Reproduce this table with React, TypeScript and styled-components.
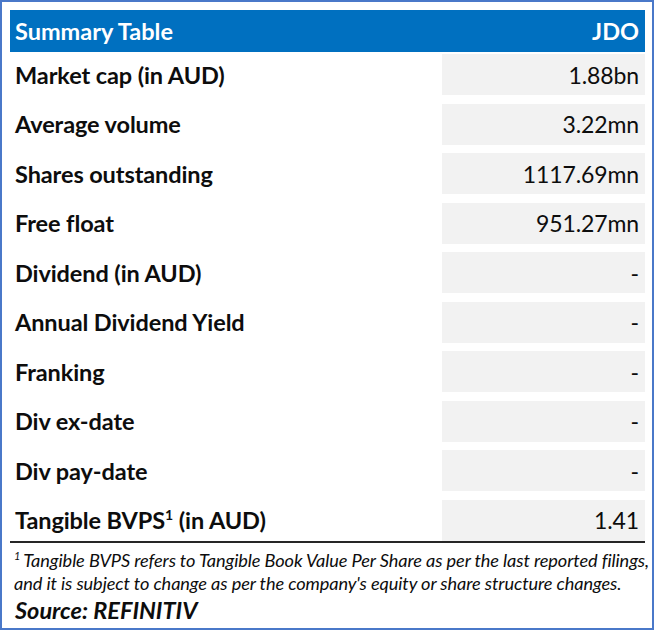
import React, { FC } from 'react';
import styled, { createGlobalStyle } from 'styled-components';

const GlobalStyle = createGlobalStyle`
  html, body {
    margin: 0;
    padding: 0;
    background: #ffffff;
  }
`

interface Row {
  label: string
  sup?: string
  rest?: string
  value: string
}

const rows: Row[] = [
  { label: 'Market cap (in AUD)', value: '1.88bn' },
  { label: 'Average volume', value: '3.22mn' },
  { label: 'Shares outstanding', value: '1117.69mn' },
  { label: 'Free float', value: '951.27mn' },
  { label: 'Dividend (in AUD)', value: '-' },
  { label: 'Annual Dividend Yield', value: '-' },
  { label: 'Franking', value: '-' },
  { label: 'Div ex-date', value: '-' },
  { label: 'Div pay-date', value: '-' },
  { label: 'Tangible BVPS', sup: '1', rest: ' (in AUD)', value: '1.41' },
]

const Frame = styled.div`
  width: 654px;
  height: 630px;
  box-sizing: border-box;
  border: 2px solid #4a78c9;
  padding: 8px 7px 0 8px;
  font-family: Lato, 'Open Sans', sans-serif;
  color: #0d0d0d;
`

const Header = styled.div`
  display: flex;
  justify-content: space-between;
  align-items: center;
  height: 42px;
  padding: 0 6px 0 5px;
  background: #0070c0;
  color: #ffffff;
  font-weight: 700;
  font-size: 23.5px;
  box-sizing: border-box;
`

const Rows = styled.div`
  display: flex;
  flex-direction: column;
  gap: 8.5px;
  padding-top: 2px;
  border-bottom: 2px solid #262626;
`

const RowEl = styled.div`
  display: grid;
  grid-template-columns: 1fr 203px;
  height: 41px;
  align-items: center;
`

const Label = styled.div`
  padding-left: 5px;
  font-weight: 700;
  font-size: 23.5px;
  letter-spacing: -0.1px;

  sup {
    font-size: 14px;
    vertical-align: 9px;
    line-height: 0;
  }
`

const Value = styled.div`
  height: 100%;
  display: flex;
  align-items: center;
  justify-content: flex-end;
  padding-right: 6px;
  background: #f2f2f2;
  font-size: 23px;
  letter-spacing: -0.1px;
`

const Note = styled.p`
  margin: 6px 0 0 0;
  padding-left: 4px;
  font-style: italic;
  font-size: 18.2px;
  line-height: 23px;
  letter-spacing: -0.1px;
  white-space: nowrap;

  sup {
    font-size: 11px;
    vertical-align: 7px;
    line-height: 0;
    margin-right: 3px;
  }
`

const Source = styled.div`
  margin-top: 1px;
  padding-left: 5px;
  font-style: italic;
  font-weight: 700;
  font-size: 23.5px;
`

const App: FC = () => {
  return (
    <>
      <GlobalStyle />
      <Frame>
        <Header>
          <span>Summary Table</span>
          <span>JDO</span>
        </Header>
        <Rows>
          {rows.map((row, index) => (
            <RowEl key={`row-${index}`}>
              <Label>
                {row.label}
                {row.sup && <sup>{row.sup}</sup>}
                {row.rest}
              </Label>
              <Value>{row.value}</Value>
            </RowEl>
          ))}
        </Rows>
        <Note>
          <sup>1</sup>Tangible BVPS refers to Tangible Book Value Per Share as per the last reported filings,
          <br />
          and it is subject to change as per the company's equity or share structure changes.
        </Note>
        <Source>Source: REFINITIV</Source>
      </Frame>
    </>
  );
};

export default App;
